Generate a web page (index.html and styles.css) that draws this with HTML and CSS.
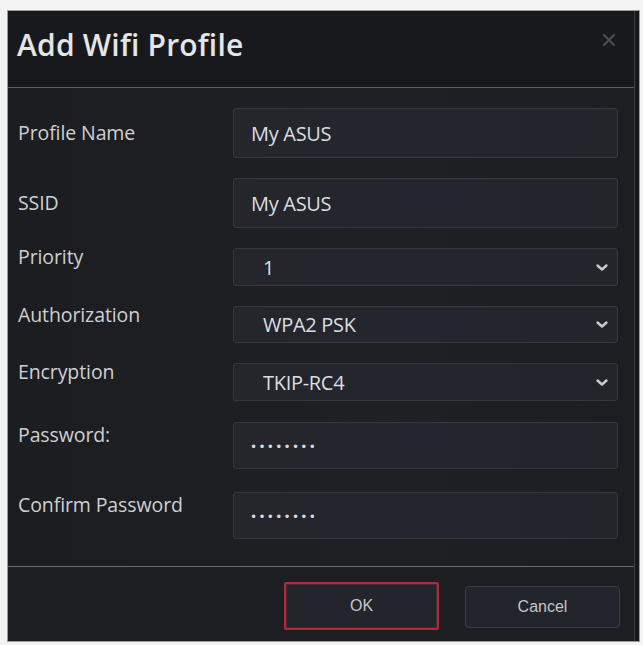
FILE: index.html
```html
<!DOCTYPE html>
<html lang="en">
<head>
<meta charset="utf-8">
<title>Add Wifi Profile</title>
<link rel="stylesheet" href="styles.css">
</head>
<body>
<div class="dialog">
  <div class="frame">
    <header class="head">
      <h1 class="title">Add Wifi Profile</h1>
      <span class="close" aria-label="Close">
        <svg width="14" height="14" viewBox="0 0 14 14"><path d="M2 2 L12 12 M12 2 L2 12" stroke="#4b4e53" stroke-width="2" stroke-linecap="round"/></svg>
      </span>
    </header>
    <main class="body">
      <div class="row row-text">
        <label class="label">Profile Name</label>
        <div class="field field-text">My ASUS</div>
      </div>
      <div class="row row-text">
        <label class="label">SSID</label>
        <div class="field field-text">My ASUS</div>
      </div>
      <div class="row row-select">
        <label class="label">Priority</label>
        <div class="field field-select"><span>1</span>
          <svg class="chev" width="14" height="9" viewBox="0 0 14 9"><path d="M2.5 2.5 L7 6.5 L11.5 2.5" fill="none" stroke="#c9cbcf" stroke-width="2.4" stroke-linecap="round" stroke-linejoin="round"/></svg>
        </div>
      </div>
      <div class="row row-select">
        <label class="label">Authorization</label>
        <div class="field field-select field-auth"><span>WPA2 PSK</span>
          <svg class="chev" width="14" height="9" viewBox="0 0 14 9"><path d="M2.5 2.5 L7 6.5 L11.5 2.5" fill="none" stroke="#c9cbcf" stroke-width="2.4" stroke-linecap="round" stroke-linejoin="round"/></svg>
        </div>
      </div>
      <div class="row row-select">
        <label class="label">Encryption</label>
        <div class="field field-select"><span>TKIP-RC4</span>
          <svg class="chev" width="14" height="9" viewBox="0 0 14 9"><path d="M2.5 2.5 L7 6.5 L11.5 2.5" fill="none" stroke="#c9cbcf" stroke-width="2.4" stroke-linecap="round" stroke-linejoin="round"/></svg>
        </div>
      </div>
      <div class="row row-pass row-pass1">
        <label class="label">Password:</label>
        <div class="field field-pass"><span class="dots">••••••••</span></div>
      </div>
      <div class="row row-pass row-pass2">
        <label class="label">Confirm Password</label>
        <div class="field field-pass"><span class="dots">••••••••</span></div>
      </div>
    </main>
    <footer class="foot">
      <button class="btn btn-ok">OK</button>
      <button class="btn btn-cancel">Cancel</button>
    </footer>
  </div>
</div>
</body>
</html>
```
FILE: styles.css
```css
* { box-sizing: border-box; }
html, body { margin: 0; padding: 0; }
body {
  background: #f3f3f3;
  padding: 10px 0 0 7px;
  font-family: "Open Sans", "Noto Sans", sans-serif;
}
.dialog {
  width: 633px;
  height: 632px;
  border: 1px solid #9a9b9d;
  background: #15171a;
  padding-right: 4px;
  display: flex;
}
.frame {
  flex: 1;
  display: flex;
  flex-direction: column;
  background: #1d1f23;
  border-right: 1px solid #3a3d42;
}
.head {
  height: 77px;
  flex: none;
  background: #17191c;
  border-bottom: 1px solid #5d6064;
  display: flex;
  align-items: center;
  justify-content: space-between;
  padding: 0 18px 10px 9px;
}
.title {
  margin: 0;
  font-size: 30px;
  font-weight: 600;
  color: #e4e5e7;
  letter-spacing: 0.2px;
}
.close { display: flex; margin-top: -8px; }
.body {
  flex: 1;
  padding: 20px 16px 0 10px;
  display: flex;
  flex-direction: column;
  gap: 20px;
  background: linear-gradient(90deg, #1b1d21 0%, #1e2024 60%, #1c1e22 100%);
}
.row {
  display: flex;
  align-items: flex-start;
}
.row-text { align-items: center; }
.label {
  width: 215px;
  flex: none;
  font-size: 19.5px;
  line-height: 22px;
  color: #cfd0d2;
  letter-spacing: -0.1px;
}
.row-select .label { margin-top: -2px; }
.row-pass .label { margin-top: 2px; }
.row-pass1 { margin-top: 1px; }
.row-pass2 { margin-top: 3px; }
.field {
  flex: 1;
  display: flex;
  align-items: center;
  background: linear-gradient(90deg, #24262b 0%, #23262e 50%, #22252a 100%);
  border: 1px solid #36393e;
  border-radius: 3px;
  color: #dcdde0;
  font-size: 20px;
  letter-spacing: -0.3px;
}
.field-text { height: 50px; padding-left: 17px; }
.field-select {
  height: 38px;
  padding: 0 8px 0 29px;
  justify-content: space-between;
  font-size: 20px;
}
.field-auth { height: 37px; }
.field-pass { height: 47px; padding-left: 16px; }
.dots {
  font-family: "DejaVu Sans", sans-serif;
  font-size: 12px;
  letter-spacing: 1.3px;
  color: #d8d9dc;
  margin-top: 2px;
}
.chev { display: block; }
.foot {
  height: 75px;
  flex: none;
  border-top: 1px solid #6a6d71;
  background: #1c1e22;
  display: flex;
  align-items: center;
  justify-content: flex-end;
  gap: 26px;
  padding: 4px 14px 0 0;
}
.btn {
  width: 155px;
  font-family: "Liberation Sans", Arial, sans-serif;
  font-size: 16px;
  color: #c4c5c8;
  background: #22252b;
  cursor: pointer;
}
.btn-ok {
  height: 48px;
  border: 2px solid #b32a3a;
  border-radius: 2px;
  box-shadow: inset 0 0 0 1px #4a2a32;
}
.btn-cancel {
  height: 42px;
  border: 1px solid #3a3d43;
  border-radius: 4px;
  margin-top: 2px;
}
```
